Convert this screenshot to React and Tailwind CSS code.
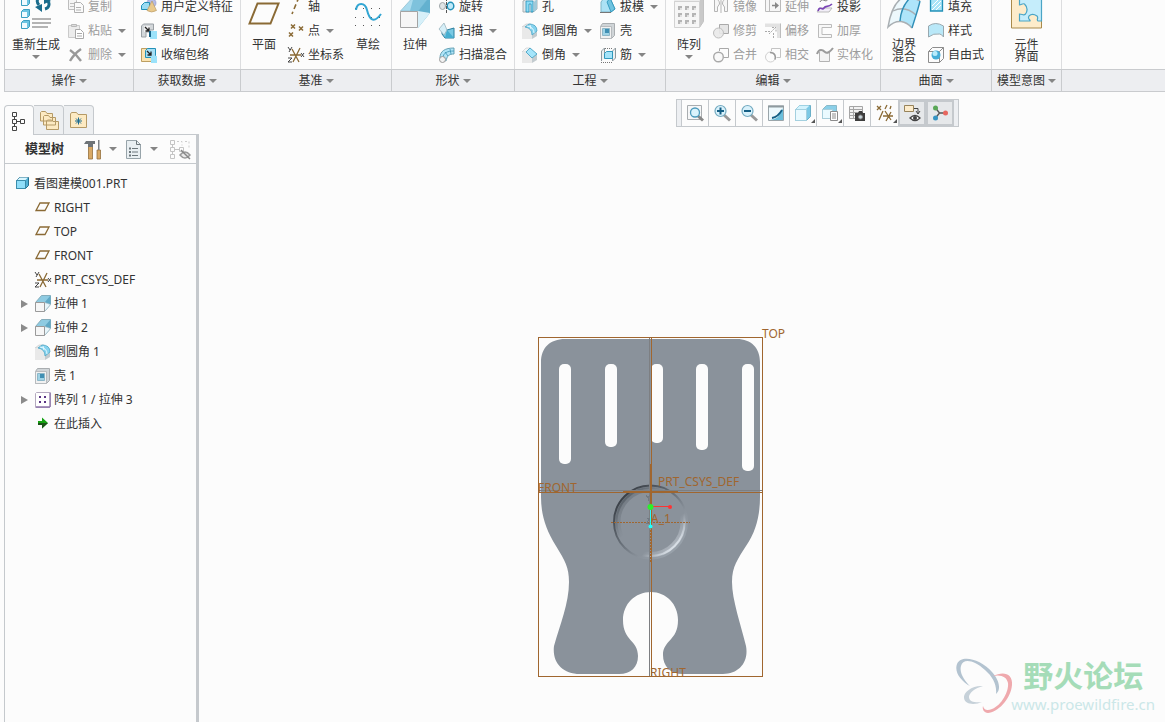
const cyan = '#2391b8';
const brown = '#8a6a35';
const gray = '#a9a9a9';

const icons = {
    // 操作
    regenerate: (
        <>
            <path d="M1.500 2.500l2-2h6v6l-2 2h-6zM1.500 14.500l2-2h6v6l-2 2h-6zM1.500 25.500l2-2h6v6l-2 2h-6z" fill="#6cc4e2" stroke="#3b9fc2" />
            <path d="M2 3h5v5H2zM2 15h5v5H2zM2 26h5v5H2z" fill="#effaff" />
            <path d="M21 0c-4 1-5 5-2 8M25 12c4-1 5-5 3-8" fill="none" stroke="#1b6c8c" strokeWidth="3" />
            <path d="M15 9l7-3v8zM31 3l-7 3V-2z" fill="#1b6c8c" transform="translate(0 1)" />
            <path d="M12 22h19M12 26h19M12 30h16" stroke="#9b9b9b" strokeWidth="1.600" />
        </>
    ),
    copy: (
        <>
            <path d="M.5-.5h6l2 2v9h-8zM2 4.500h4M2 7.500h4" fill="#f4f4f4" stroke="#bdbdbd" />
            <path d="M6.500 3.500h6l3 3v7h-9zM8 8.500h5M8 11h5" fill="#fafafa" stroke="#b0b0b0" />
        </>
    ),
    paste: (
        <>
            <path d="M.5 2.500h11v12H.5z" fill="#ececec" stroke="#cacaca" />
            <path d="M3.500 3.500v-2h5v2z" fill="#ddd" stroke="#b9b9b9" />
            <path d="M7.500 6.500h5l3 3v6h-8zM9 10.500h5M9 13h5" fill="#fff" stroke="#a9a9a9" />
        </>
    ),
    remove: <path d="M2 3q6 4 11 11M13 2Q6 7 2 14" fill="none" stroke="#999" strokeWidth="2.400" />,
    // 获取数据
    udf: (
        <>
            <circle cx="10.500" cy="4" r="4.500" fill="#b6bde6" stroke="#8f97cb" strokeWidth=".7" />
            <path d="M.5 6.500l3-3h5v5l-2 2h-6z" fill="#9bdcf3" stroke={cyan} />
            <path d="M11 2l4.500 9.500q-5 3-9.500 0z" fill="#e9c98c" stroke="#b09260" strokeWidth=".6" />
        </>
    ),
    copyGeom: (
        <>
            <path d="M.5 3l2-2h10v6H9v2H5v5H.5z" fill="#d3d7da" stroke="#9aa0a5" />
            <path d="M3 3h6v6H3z" fill="#f0f1f2" />
            <path d="M4 4l4 4M8 4.500V8H4.500" stroke="#222" fill="none" strokeWidth="1.300" />
            <path d="M9 8h7v8H9z" fill="#9be2fa" />
            <path d="M8 8h2v6H8z" fill="#17658a" />
        </>
    ),
    shrink: (
        <>
            <path d="M.5 1.500h12v13H.5z" fill="#fbe3b1" stroke="#bd9f62" />
            <path d="M4.500 3.500l2-2h8v7l-2 2h-8z" fill="#a5dff5" stroke={cyan} />
            <path d="M6 4l4 4M10 4.500V8H6.500" stroke="#222" fill="none" strokeWidth="1.300" />
            <path d="M10 9h6v7h-6z" fill="#9be2fa" />
        </>
    ),
    // 基准
    plane: <path d="M1.500 26.500L9.500 6.500h21l-8 20z" fill="none" stroke={brown} strokeWidth="2" />,
    axis: <path d="M11 -2L4 15" stroke={brown} strokeWidth="1.600" strokeDasharray="5 3" />,
    point: <path d="M3 1.500l4 4M7 1.500l-4 4M11 3.500l4 4M15 3.500l-4 4M1 9.500l4 4M5 9.500l-4 4" stroke={brown} strokeWidth="1.500" />,
    csys: (
        <>
            <path d="M2 8h11M4 2l7 13M12 1L5 15" stroke={brown} strokeWidth="1.300" />
            <path d="M0 0l2 3M4 0L1 5M0 11h4l-4 4h4M13 6l3 4M16 6l-3 4" stroke="#444" fill="none" />
        </>
    ),
    sketch: (
        <>
            <path d="M3 2.500h26M3 11.500h26M3 20.500h26M3 28.500h26" stroke="#555" strokeDasharray="1 7" />
            <path d="M4 13c1-8 9-8 11 0s6 15 14 4" fill="none" stroke="#32a6d3" strokeWidth="2" />
        </>
    ),
    // 形状
    extrudeBig: (
        <>
            <path d="M1.500 14L15 -1h16L19 14z" fill="#a9dbee" stroke="#8dbccd" strokeWidth=".7" />
            <path d="M15 -1L11 14h8L31 0z" fill="#7ec2dc" />
            <path d="M19 14L31 -1v17L19 31z" fill="#63b1cf" />
            <path d="M19 31V14l12 2z" fill="#d7f0f9" />
            <path d="M1.500 14.500h17v16h-17z" fill="#f6f6f6" stroke="#a4a4a4" />
        </>
    ),
    revolve: (
        <>
            <ellipse cx="3.500" cy="7" rx="3" ry="3.500" fill="#dfe4e6" stroke="#9fa6a9" />
            <ellipse cx="11.500" cy="7" rx="3.300" ry="3.700" fill="#bfeafa" stroke={cyan} strokeWidth="1.500" />
            <path d="M7.500-1v15" stroke="#555" strokeDasharray="3 1" />
        </>
    ),
    sweep: (
        <>
            <path d="M3 5l5 2 7-2v10H6L3 11z" fill="#7ac9e3" stroke="#2a7f9f" />
            <path d="M8 7l7 8H6z" fill="#46aed0" />
            <path d="M5 0l3 7-3 5-5-6z" fill="#d6eff8" stroke="#9ab4be" strokeWidth=".8" />
        </>
    ),
    blend: (
        <>
            <path d="M1 11C1 4 6 1 15 1v6c-5 0-7 2-8 7z" fill="#b0e4f7" stroke="#5a98ad" strokeWidth=".9" />
            <path d="M4 11c0-5 4-7 11-7M6 5l3 4M11 2l1 5" fill="none" stroke="#3b93b3" strokeWidth=".8" />
            <circle cx="3.500" cy="12.500" r="3" fill="#f2f2f2" stroke="#999" />
        </>
    ),
    // 工程
    hole: (
        <>
            <path d="M1 2l4-2h10v10l-4 3H1z" fill="#e3e7e9" stroke="#aab0b3" />
            <path d="M4 2h7v11H9V5H7v8H4z" fill="#8cdcf6" stroke={cyan} strokeWidth=".8" />
            <path d="M12 3l3-3v10l-3 3z" fill="#9fc9d8" />
        </>
    ),
    round: (
        <>
            <path d="M0 4l4-3h5L4 4z" fill="#e6e9ea" stroke="#c4c8ca" strokeWidth=".6" />
            <path d="M0 4h3q7 1 7 8v4H0z" fill="#e9e9e9" />
            <path d="M10 12l5-4v5l-5 3z" fill="#c3cbcf" />
            <path d="M3 4l4-3q8 0 8 7l-5 4q0-7-7-8z" fill="#86d3ef" stroke="#4ba4c4" strokeWidth=".8" />
            <path d="M5 3q7 1 7 7M8 2l1 4" stroke="#e6f9ff" fill="none" />
        </>
    ),
    draft: (
        <>
            <path d="M1 3l3-4h6l5 11-4 3H1z" fill="#ade2f5" stroke="#7fb5c8" />
            <path d="M7 3l3-4 5 11-4 3z" fill="#6fc3e0" stroke={cyan} strokeWidth=".8" />
            <path d="M0 13.500h11" stroke="#777" />
        </>
    ),
    shell: (
        <>
            <path d="M.5 3.500l2-3h12v12l-3 3H.5z" fill="#d0d5d8" stroke="#a9adb0" />
            <path d="M.5 3.500h11v12H.5z" fill="#f1f1f1" stroke="#b7bbbe" />
            <path d="M2.500 5.500h7v7h-7z" fill="#9fd3e6" stroke="#8cb7c8" />
            <path d="M5 6h4v4H5z" fill="#3f8fb3" />
        </>
    ),
    chamfer: (
        <>
            <path d="M0 5l4-4h4L4 5z" fill="#f3f4f4" stroke="#c4c8ca" strokeWidth=".6" />
            <path d="M0 5h4l6 6v5H0z" fill="#e9e9e9" />
            <path d="M10 11l5-4v6l-5 3z" fill="#c3cbcf" />
            <path d="M4 5l4-4 7 6-5 4z" fill="#a5e5fb" stroke="#4ba4c4" strokeWidth=".9" />
        </>
    ),
    rib: (
        <>
            <path d="M1.500 14V4l3-3v10M12.500 14V4l3-3v10l-3 3" fill="#edf1f2" stroke="#8f999e" />
            <path d="M4.500 6.500l2-2h6v7h-8z" fill="#a4e3f9" stroke={cyan} strokeWidth=".9" />
            <path d="M1 15.500h12M5 1.500h8" stroke="#777" strokeDasharray="1 1" />
        </>
    ),
    // 编辑
    patternBig: (
        <>
            <path d="M1.500 4.500l4-5h25v25l-4 6z" fill="#c9c9c9" stroke="#c2c2c2" />
            <path d="M1.500 4l4-5h24l-3 5z" fill="#ededed" />
            <path d="M1.500 4.500h25v26h-25z" fill="#f6f6f6" stroke="#d2d2d2" />
            <path d="M5 9h4v4H5zM12 9h4v4h-4zM19 9h4v4h-4zM5 16h4v4H5zM12 16h4v4h-4zM19 16h4v4h-4zM5 23h4v4H5zM12 23h4v4h-4zM19 23h4v4h-4z" fill="#b5b5b5" />
            <path d="M7 11h2v2H7zM14 11h2v2h-2zM21 11h2v2h-2zM7 18h2v2H7zM14 18h2v2h-2zM21 18h2v2h-2zM7 25h2v2H7zM14 25h2v2h-2zM21 25h2v2h-2z" fill="#e2e2e2" />
        </>
    ),
    mirror: (
        <path d="M1.500 12.500V0c4 0 5 2 5 5l-2 3v4.500zM14.500 12.500V0c-4 0-5 2-5 5l2 3v4.500zM8 -1v15" fill="#f6f6f6" stroke="#b5b5b5" />
    ),
    trim: (
        <>
            <path d="M6.500 1.500h9v9h-9z" fill="#e5e5e5" stroke={gray} />
            <circle cx="5.500" cy="10" r="5" fill="#e9e9e9" fillOpacity=".9" stroke="#bdbdbd" />
        </>
    ),
    merge: (
        <>
            <path d="M6.500 4V1.500h9v9h-5" fill="none" stroke={gray} />
            <circle cx="5.500" cy="10" r="4.800" fill="#f9f9f9" stroke={gray} strokeWidth="1.400" />
        </>
    ),
    extend: (
        <>
            <path d="M.5-.5h15v13H.5zM4.500-.5v13" fill="#f6f6f6" stroke="#bbb" />
            <path d="M7 6.500h4" stroke="#888" strokeWidth="1.500" />
            <path d="M10 3l4 3.500-4 3.500z" fill="#888" />
        </>
    ),
    offset: (
        <>
            <path d="M0 .5h15.500V15H12V4H0z" fill="#e2e2e2" />
            <path d="M15.500.5V15" stroke="#bdbdbd" />
            <path d="M4 11l6-6M7 4.500h4v4M0 8.500h6M8.500 10v6" fill="none" stroke={gray} strokeDasharray="2 1" />
        </>
    ),
    intersect: (
        <>
            <path d="M6.500 4V1.500h9v9h-4" fill="none" stroke="#c4c4c4" />
            <circle cx="5.500" cy="10" r="5" fill="none" stroke="#d0d0d0" />
            <path d="M5 5.500c5 0 6 4 5 7" fill="none" stroke="#999" strokeWidth="1.500" />
        </>
    ),
    project: (
        <>
            <path d="M3 3c3-6 5 3 9-4" fill="none" stroke="#777" />
            <path d="M0 13l3-4h12l-3 4z" fill="#f2eef8" stroke="#bbb" />
            <path d="M1 12c2-6 4 0 6-3s4 0 8-4" fill="none" stroke="#7b45b5" strokeWidth="1.700" />
        </>
    ),
    thicken: <path d="M14.500 1.500H1.500v13h13v-3H5v-7h9.500z" fill="#f8f8f8" stroke="#bbb" />,
    solidify: (
        <>
            <path d="M2.500 5v9.500h10V5" fill="#f3f3f3" stroke="#b3b3b3" />
            <path d="M0 7c2-6 6-4 8-2s5 0 8-4" fill="none" stroke="#9b9b9b" strokeWidth="2" />
        </>
    ),
    // 曲面
    boundary: (
        <>
            <path d="M0 30C2 18 6 6 14 1q9-2 18 3c-2 9-5 17-8 27-6-7-15-10-24-1z" fill="#edf8fc" />
            <path d="M22 1q6 1 10 3c-2 9-5 17-8 27-4-4-7-6-12-7q1-14 10-23z" fill="#aee5fa" />
            <path d="M24 31c-6-7-15-10-24-1C2 18 6 6 14 1q9-2 18 3" fill="none" stroke="#a9afb3" strokeWidth="1.500" />
            <path d="M5 14q12-6 23 4" fill="none" stroke="#a9afb3" strokeWidth="1.300" />
            <path d="M22 1q-9 9-10 23M32 4c-2 9-5 17-8 27" fill="none" stroke="#2f8fb7" strokeWidth="1.400" />
        </>
    ),
    fill: (
        <>
            <path d="M2.500 0h12v12h-12z" fill="#a9e4f8" stroke={cyan} strokeWidth="1.300" />
            <path d="M4 7l6-6M4 11l9-9M8 11l5-5" stroke="#fff" />
        </>
    ),
    style: <path d="M.5 14V3q7-5 15 0v11q-2-3-4-3-6-1-11 3z" fill="#b9e8f8" stroke="#98a8af" />,
    freestyle: (
        <>
            <path d="M.5 4.500h11v11H.5zM.5 4.500l4-4h11v11l-4 4M11.500 4.500l4-4" fill="none" stroke="#8d8d8d" />
            <circle cx="8" cy="8" r="4.500" fill="#45aed8" />
            <circle cx="7" cy="6.500" r="2.500" fill="#b8ebfb" />
        </>
    ),
    component: (
        <>
            <path d="M.5-1h30v32H.5z" fill="#fdeccb" stroke="#a98a4b" />
            <path d="M8.500-1h22v25H27c-2-1 1-3-1-5-3-2-6-2-8 0-2 3 2 4 1 5H8.500v-7c3 0 4 2 6 0 2-3 2-7-1-10-2-1-3 1-5 1z" fill="#c5edfb" stroke="#4aa5c6" strokeWidth="1.200" />
        </>
    ),
    // 视图工具栏
    zoomFit: (
        <>
            <path d="M.5.5h14v14H.5z" fill="#f6f7f8" stroke="#a9adb0" />
            <path d="M11 11l5 4.500" stroke="#888" strokeWidth="3" />
            <circle cx="8" cy="7.500" r="4.500" fill="#daf3fc" stroke="#4b9abc" strokeWidth="1.300" />
        </>
    ),
    zoomIn: (
        <>
            <path d="M10 10l6 5.500" stroke="#999" strokeWidth="3" />
            <circle cx="6.500" cy="6" r="5.500" fill="#d8f1fb" stroke="#73aac0" strokeWidth="1.200" />
            <path d="M3 6h7M6.500 2.500v7" stroke="#155f85" strokeWidth="2" />
        </>
    ),
    zoomOut: (
        <>
            <path d="M10 10l6 5.500" stroke="#999" strokeWidth="3" />
            <circle cx="6.500" cy="6" r="5.500" fill="#d8f1fb" stroke="#73aac0" strokeWidth="1.200" />
            <path d="M3 6h7" stroke="#155f85" strokeWidth="2" />
        </>
    ),
    repaint: (
        <>
            <path d="M.5 1h15v14.500H.5z" fill="#eef9fd" stroke="#9aa5aa" />
            <path d="M15 3v12H2q9 0 13-12z" fill="#6cbfdc" />
            <path d="M4 13q6-1 10-8" stroke="#155f85" strokeWidth="1.800" fill="none" />
            <path d="M0 1.500h16" stroke="#8f9a9f" strokeWidth="2" />
        </>
    ),
    display: (
        <>
            <path d="M.5 4.500l4-4h11v11l-4 4H.5z" fill="#7cc9e5" stroke="#6bb0c8" />
            <path d="M1 4l3.500-3.500h10L11 4z" fill="#d3f3fd" />
            <path d="M.5 4.500h11v11H.5z" fill="#eafaff" stroke="#a4d0df" />
        </>
    ),
    saved: (
        <>
            <path d="M.5 4.500l4-4h10v9l-4 4H.5z" fill="#8acfe8" stroke="#89b9c9" />
            <path d="M.5 4.500h10v9H.5z" fill="#eafaff" stroke="#a8cedb" />
            <path d="M8.500 6.500h7v9h-7zM10 9h4M10 11h4M10 13h4" fill="#fff" stroke="#8c8c8c" />
        </>
    ),
    camera: (
        <>
            <path d="M.5 1.500h13v12H.5zM.5 4.500h13M.5 7.500h13M.5 10.500h13M4.500 1v12" fill="#f2f2f2" stroke="#a5a5a5" />
            <path d="M6 8h3l1-2h3l1 2h2v8H6z" fill="#3d3d3d" />
            <circle cx="11.500" cy="12" r="2" fill="#c7d5dc" stroke="#888" />
        </>
    ),
    datum: <path d="M0 1l4 4M4 1L0 5M10 0L8 4M6 6l-4 9M14 1l-1 3M6 11h10M8 6l6 9M14 7l-5 9" stroke={brown} strokeWidth="1.300" />,
    annotation: (
        <>
            <path d="M.5.5h9v6h-9z" fill="#fdeccb" stroke="#97835a" />
            <path d="M10 3.500h4v5M12 6l2 3 2-3" fill="none" stroke="#444" />
            <path d="M6 13q5-5 10 0-5 5-10 0z" fill="#fff" stroke="#444" strokeWidth="1.300" />
            <circle cx="11" cy="13" r="2" fill="#444" />
        </>
    ),
    spin: (
        <>
            <path d="M3.500 3l4 5h6M7.500 8l-4 5" fill="none" stroke="#555" strokeWidth="1.300" />
            <circle cx="3.500" cy="3" r="2.500" fill="#59a756" />
            <circle cx="13.500" cy="8" r="2.500" fill="#e7675f" />
            <circle cx="3.500" cy="13" r="2.500" fill="#3694c3" />
        </>
    ),
    // 模型树
    tree: <path d="M2.500.5h4v4h-4zM2.500 7.500h4v4h-4zM2.500 14.500h4v4h-4zM10.500 7.500h4v4h-4zM4.500 4.500v3M4.500 11.500v3M6.500 9.500h4" fill="none" stroke="#444" />,
    folders: <path d="M.5 10V1.500l1-1h4L7 2.500h5.500V10zM3.500 14V5.500l1-1h4L10 6.500h5.500V14zM6.500 18.500V10l1-1h4L13 10.500h5.500v8z" fill="#fdeac2" stroke="#b59a66" />,
    favorites: (
        <>
            <path d="M.5 16.500V3l1-1.500h5L8 3.500h8.500v13z" fill="#fdeac2" stroke="#b59a66" />
            <path d="M8.500 6.500v7M5 10h7M6 7.500l5 5M11 7.500l-5 5" stroke="#1d6c90" />
        </>
    ),
    tools: (
        <>
            <path d="M4.500 5h4v14h-4zM13 10h3.500v9H13z" fill="#d9a965" stroke="#94703c" strokeWidth=".8" />
            <path d="M0 4l2-3h9v3H9v3H4V4z" fill="#6e7478" />
            <path d="M14 0h1.500v10H14z" fill="#7d8286" />
        </>
    ),
    list: (
        <>
            <path d="M1.500.5h10l4 4v14h-14z" fill="#e9eff2" stroke="#98a4aa" />
            <path d="M11.500.5v4h4M7 8.500h6M7 12h6M7 15.500h6" fill="none" stroke="#6d777c" />
            <path d="M4 7.500h2v2H4zM4 11h2v2H4zM4 14.500h2v2H4z" fill="#6d777c" />
        </>
    ),
    hideTree: (
        <>
            <path d="M.5.5h4v4h-4zM.5 7.500h4v4h-4zM.5 14.500h4v4h-4zM2.500 5v2M2.500 12v2M5 9.500h4M9.500 7.500h4v4h-4z" fill="none" stroke="#c4c4c4" />
            <path d="M7 1.500h5v4M15 1.500h4v8" fill="none" stroke="#ccc" strokeDasharray="2 2" />
            <path d="M10 15q5-6 10 0-5 6-10 0z" fill="#e9e9e9" stroke="#999" strokeWidth="1.500" />
            <path d="M11 10l9 9" stroke="#888" strokeWidth="1.500" />
        </>
    ),
    part: (
        <>
            <path d="M1.500 4.500l3-3h9v8l-3 3h-9z" fill="#4fb0d6" stroke="#26708f" />
            <path d="M2 4l3-2.500h8L10.500 4z" fill="#d9f6ff" />
            <path d="M1.500 4.500h9v8h-9z" fill="#8fdefa" stroke="#3b8dac" />
        </>
    ),
    datumPlane: <path d="M1 10.500l4-7.500h9l-4 7.500z" fill="none" stroke={brown} strokeWidth="1.300" />,
    extrude: (
        <>
            <path d="M.5 6.500l6-7h9v9l-6 7z" fill="#8ecbe2" stroke="#86adbb" />
            <path d="M9.500 6.500l6-7v9z" fill="#5fa9c6" />
            <path d="M9.500 15.500v-9l6 2z" fill="#e8f6fb" stroke="#a8bcc4" strokeWidth=".6" />
            <path d="M.5 6.500h9v9h-9z" fill="#f6f6f6" stroke="#9a9a9a" />
        </>
    ),
    pattern: (
        <>
            <path d="M.5 1.500l1-1h14v14l-1 1H.5z" fill="#fff" stroke="#b5aac0" />
            <path d="M4 4h2v2H4zM9 4h2v2H9zM4 9h2v2H4zM9 9h2v2H9z" fill="#5a3585" />
            <path d="M15 1v14M1 15h14" stroke="#8d74aa" strokeWidth="1.300" />
        </>
    ),
    insert: (
        <>
            <path d="M3 5h4V1.500L13 7l-6 5.500V9H3z" fill="#15a312" />
            <path d="M3 7h10l-6 5.500V9H3z" fill="#1b5317" />
        </>
    ),
};

function Icon({ name, size = 16 }) {
    return (
        <svg width={size} height={size} viewBox={`0 0 ${size} ${size}`} className="shrink-0 overflow-visible" aria-hidden="true">
            {icons[name]}
        </svg>
    );
}

function Caret() {
    return (
        <svg width="8" height="4" viewBox="0 0 8 4" className="shrink-0" aria-hidden="true">
            <path d="M0 0h8L4 4z" fill="#858585" />
        </svg>
    );
}

const ribbon = [
    {
        title: '操作', width: 'w-[129px]',
        items: [
            { big: true, icon: 'regenerate', lines: ['重新生成'], menu: true, width: 'w-12' },
            { rows: [['copy', '复制', false, true], ['paste', '粘贴', true, true], ['remove', '删除', true, true]] },
        ],
    },
    {
        title: '获取数据', width: 'w-[107px]',
        items: [{ rows: [['udf', '用户定义特征'], ['copyGeom', '复制几何'], ['shrink', '收缩包络']] }],
    },
    {
        title: '基准', width: 'w-[151px]',
        items: [
            { big: true, icon: 'plane', lines: ['平面'] },
            { rows: [['axis', '轴'], ['point', '点', true], ['csys', '坐标系']] },
            { big: true, icon: 'sketch', lines: ['草绘'] },
        ],
    },
    {
        title: '形状', width: 'w-[123px]',
        items: [
            { big: true, icon: 'extrudeBig', lines: ['拉伸'] },
            { rows: [['revolve', '旋转'], ['sweep', '扫描', true], ['blend', '扫描混合']] },
        ],
    },
    {
        title: '工程', width: 'w-[151px]',
        items: [
            { rows: [['hole', '孔'], ['round', '倒圆角', true], ['chamfer', '倒角', true]] },
            { rows: [['draft', '拔模', true], ['shell', '壳'], ['rib', '筋', true]] },
        ],
    },
    {
        title: '编辑', width: 'w-[215px]',
        items: [
            { big: true, icon: 'patternBig', lines: ['阵列'], menu: true },
            { rows: [['mirror', '镜像', false, true], ['trim', '修剪', false, true], ['merge', '合并', false, true]] },
            { rows: [['extend', '延伸', false, true], ['offset', '偏移', false, true], ['intersect', '相交', false, true]] },
            { rows: [['project', '投影'], ['thicken', '加厚', false, true], ['solidify', '实体化', false, true]] },
        ],
    },
    {
        title: '曲面', width: 'w-[111px]',
        items: [
            { big: true, icon: 'boundary', lines: ['边界', '混合'] },
            { rows: [['fill', '填充'], ['style', '样式'], ['freestyle', '自由式']] },
        ],
    },
    {
        title: '模型意图', width: 'w-[70px]', center: true,
        items: [{ big: true, icon: 'component', lines: ['元件', '界面'] }],
    },
];

function BigButton({ item }) {
    return (
        <button className={`${item.width || 'w-8'} h-[72px] pt-[2px] shrink-0 flex flex-col items-center`}>
            <Icon name={item.icon} size={32} />
            <span className="mt-[10px] leading-3 whitespace-nowrap">
                {item.lines.map(line => <span key={line} className="block">{line}</span>)}
            </span>
            {item.menu && <span className="mt-1"><Caret /></span>}
        </button>
    );
}

function SmallButton({ row }) {
    const [icon, label, menu, disabled] = row;
    return (
        <button
            disabled={disabled}
            className={`h-6 flex items-center gap-1 whitespace-nowrap ${disabled ? 'text-[#9c9c9c]' : 'text-[#333333]'}`}
        >
            <Icon name={icon} />
            <span>{label}</span>
            {menu && <span className="pl-[2px]"><Caret /></span>}
        </button>
    );
}

function Ribbon() {
    return (
        <header className="ml-1 flex border-l border-[#c9cbce]">
            {ribbon.map(group => (
                <section key={group.title} className={`${group.width} shrink-0`}>
                    <div className={`h-[69px] pb-[2px] px-[7px] flex items-end gap-2 overflow-hidden border-r border-[#dcdddf] ${group.center ? 'justify-center' : ''}`}>
                        {group.items.map((item, i) => item.big ? (
                            <BigButton key={i} item={item} />
                        ) : (
                            <div key={i} className="shrink-0 flex flex-col">
                                {item.rows.map(row => <SmallButton key={row[1]} row={row} />)}
                            </div>
                        ))}
                    </div>
                    <button className="w-full h-[23px] flex items-center justify-center gap-[3px] bg-[#edeef1] border-y border-r border-[#c9cbce]">
                        {group.title}
                        <Caret />
                    </button>
                </section>
            ))}
            <div className="flex-1 flex flex-col justify-end">
                <div className="h-[23px] bg-[#edeef1] border-y border-[#c9cbce]" />
            </div>
        </header>
    );
}

const treeItems = [
    { icon: 'datumPlane', label: 'RIGHT' },
    { icon: 'datumPlane', label: 'TOP' },
    { icon: 'datumPlane', label: 'FRONT' },
    { icon: 'csys', label: 'PRT_CSYS_DEF' },
    { icon: 'extrude', label: '拉伸 1', expandable: true },
    { icon: 'extrude', label: '拉伸 2', expandable: true },
    { icon: 'round', label: '倒圆角 1' },
    { icon: 'shell', label: '壳 1' },
    { icon: 'pattern', label: '阵列 1 / 拉伸 3', expandable: true },
    { icon: 'insert', label: '在此插入' },
];

function ModelTree() {
    return (
        <aside className="ml-1 mt-[13px] w-[195px] shrink-0 flex flex-col">
            <div role="tablist" className="flex h-[30px]">
                <button role="tab" aria-selected="true" aria-label="模型树" className="w-[30px] flex items-center justify-center border-t border-x border-[#c5c9cd] rounded-t-sm">
                    <Icon name="tree" size={18} />
                </button>
                <button role="tab" aria-selected="false" aria-label="文件夹浏览器" className="w-[30px] flex items-center justify-center bg-[#edeff1] border-t border-r border-b border-[#c5c9cd] rounded-tr-sm">
                    <Icon name="folders" size={18} />
                </button>
                <button role="tab" aria-selected="false" aria-label="收藏夹" className="w-[30px] flex items-center justify-center bg-[#edeff1] border-t border-r border-b border-[#c5c9cd] rounded-tr-sm">
                    <Icon name="favorites" size={18} />
                </button>
                <div className="flex-1 border-b border-[#c5c9cd]" />
            </div>
            <div className="flex-1 border-l border-l-[#c5c9cd] border-r-3 border-r-[#c5c9cd]">
                <div className="h-[29px] pl-5 pr-1 flex items-center border-b border-[#c5c9cd]">
                    <h2 className="text-[13px] font-bold whitespace-nowrap">模型树</h2>
                    <button aria-label="设置" className="ml-5 flex items-center gap-[6px]">
                        <Icon name="tools" size={19} />
                        <Caret />
                    </button>
                    <button aria-label="显示" className="ml-2 flex items-center gap-[6px]">
                        <Icon name="list" size={19} />
                        <Caret />
                    </button>
                    <button aria-label="隐藏树" disabled className="ml-3">
                        <Icon name="hideTree" size={19} />
                    </button>
                </div>
                <ul className="pt-2">
                    <li className="h-6 pl-[10px] flex items-center gap-[3px]">
                        <Icon name="part" />
                        <span>看图建模001.PRT</span>
                    </li>
                    {treeItems.map(item => (
                        <li key={item.label} className="h-6 pl-[14px] flex items-center">
                            <span className="w-4">
                                {item.expandable && (
                                    <button aria-label={`展开 ${item.label}`} className="block">
                                        <svg width="10" height="8" viewBox="0 0 10 8" aria-hidden="true">
                                            <path d="M2 0l7 4-7 4z" fill="#8b8b8b" />
                                        </svg>
                                    </button>
                                )}
                            </span>
                            <Icon name={item.icon} />
                            <span className="pl-[3px]">{item.label}</span>
                        </li>
                    ))}
                </ul>
            </div>
        </aside>
    );
}

const viewTools = [
    { icon: 'zoomFit', label: '重新调整' },
    { icon: 'zoomIn', label: '放大' },
    { icon: 'zoomOut', label: '缩小' },
    { icon: 'repaint', label: '重画' },
    { icon: 'display', label: '显示样式', menu: true },
    { icon: 'saved', label: '已保存方向', menu: true },
    { icon: 'camera', label: '视图管理器' },
    { icon: 'datum', label: '基准显示过滤器', menu: true, wide: true },
    { icon: 'annotation', label: '注释显示', pressed: true, wide: true },
    { icon: 'spin', label: '旋转中心', pressed: true, wide: true },
];

function ViewToolbar() {
    return (
        <div role="toolbar" className="ml-[477px] mt-[7px] w-max h-7 flex bg-[#edeff2] border border-[#c5c9cd] px-1">
            {viewTools.map(tool => (
                <button
                    key={tool.icon}
                    aria-label={tool.label}
                    aria-pressed={tool.pressed}
                    className={`relative flex items-center justify-center border-[#c5c9cd] ${tool.wide ? 'w-7' : 'w-[27px]'} ${tool.pressed ? 'bg-[#e6e8ea] border-2' : 'bg-[#fcfcfc] border-l'}`}
                >
                    <Icon name={tool.icon} />
                    {tool.menu && (
                        <svg width="4" height="4" viewBox="0 0 4 4" className="absolute right-px bottom-[3px]" aria-hidden="true">
                            <path d="M4 0v4H0z" fill="#555" />
                        </svg>
                    )}
                </button>
            ))}
        </div>
    );
}

function PartView() {
    return (
        <svg width="265" height="360" viewBox="530 325 265 360" className="absolute left-[331px] top-[233px]" role="img" aria-label="零件">
            <defs>
                <linearGradient id="rim" x1="0" y1="0" x2="1" y2="1">
                    <stop offset="0.1" stopColor="#343a41" />
                    <stop offset="0.5" stopColor="#6f7780" />
                    <stop offset="0.65" stopColor="#8a929b" />
                    <stop offset="0.88" stopColor="#9aa3ac" />
                </linearGradient>
                <linearGradient id="glow" x1="0" y1="0" x2="1" y2="1">
                    <stop offset="0.1" stopColor="#545c64" />
                    <stop offset="0.4" stopColor="#8a929b" />
                    <stop offset="0.68" stopColor="#8a929b" />
                    <stop offset="0.86" stopColor="#dbe2e9" />
                </linearGradient>
            </defs>
            <path
                d="M541 362C541 348 550 339 565 339H737C751 339 760 348 760 362V497C760 515 756 532 746 546C738 559 732 566 732 582C732 600 741 625 746 646C749 662 739 674 723 674H683C670 674 663 666 663 655C663 640 678 641 678 620C678 604 666 592 651 592C635 592 623 604 623 620C623 641 638 640 638 656C638 667 631 674 619 674H580C562 674 552 662 554 646C560 625 569 603 569 582C569 567 565 561 556 546C546 530 541 515 541 497Z"
                fill="#8a929b"
            />
            <g fill="#fcfcfc">
                <rect x="559" y="364" width="12" height="100" rx="5" />
                <rect x="605" y="364" width="12" height="83" rx="5" />
                <rect x="651" y="364" width="12" height="79" rx="5" />
                <rect x="696" y="364" width="12" height="86" rx="5" />
                <rect x="742" y="364" width="12" height="107" rx="5" />
            </g>
            <g fill="none">
                <circle cx="650.500" cy="522" r="33" stroke="url(#glow)" strokeOpacity=".45" strokeWidth="6" />
                <circle cx="650.500" cy="522" r="34" stroke="url(#glow)" strokeWidth="2" />
                <circle cx="650.500" cy="522" r="36.500" stroke="url(#rim)" strokeWidth="2" />
            </g>
            <g fill="none" shapeRendering="crispEdges">
                <path d="M649.500 337V677M538 490.500H763" stroke="#7d7f82" />
                <path d="M538.500 337.500H762.500V676.500H538.500ZM651.500 337V677M538 492.500H763" stroke="#a0662f" />
                <path d="M651 464V506M623 492H678" stroke="#a0662f" strokeWidth="2" />
                <path d="M611 522.500H690M650.500 527V562" stroke="#a0662f" strokeDasharray="2 1" />
                <path d="M646 495l2 3M650 495l-2 3v3M647 518h3l-3 5h3" stroke="#737a82" />
                <path d="M650.500 507V526" stroke="#2ff" />
                <path d="M651 506.500H670" stroke="#f33" />
            </g>
            <circle cx="650.500" cy="507" r="3" fill="#2bf02b" />
            <circle cx="670" cy="507" r="2" fill="#f33" />
            <circle cx="650.500" cy="526.500" r="2" fill="#2ff" />
            <g fill="#a0662f" className="text-[12px]">
                <text x="762" y="338">TOP</text>
                <text x="658" y="486">PRT_CSYS_DEF</text>
                <text x="538" y="492">FRONT</text>
                <text x="651" y="523">A_1</text>
                <text x="650" y="677">RIGHT</text>
            </g>
        </svg>
    );
}

function Watermark() {
    return (
        <div className="absolute right-[10px] bottom-2 flex items-end">
            <svg width="60" height="58" viewBox="0 0 60 58" aria-hidden="true">
                <g fillRule="evenodd">
                    <path d="M2 8C6-2 26 3 37 16c8 9 9 18 4 22 1-9-3-17-11-24C19 4 8 2 6 10c-2 7 4 15 9 20C6 25-1 16 2 8z" fill="#b3c3d0" />
                    <path d="M38 20c10-5 20-3 19 9-1 14-15 28-24 28-4 0-6-4-5-7 1 4 4 5 9 3 10-4 17-18 16-26-1-6-7-9-15-7z" fill="#efa9ad" />
                    <path d="M28 30c-10-1-20 6-19 12 1 7 11 7 18 4-6 1-13 0-13-5 0-4 6-9 14-11z" fill="#c6d1d9" />
                </g>
            </svg>
            <div className="-ml-1">
                <p className="pl-3 text-[30px] leading-9 font-bold text-[#a5dcb8]">野火论坛</p>
                <a href="http://www.proewildfire.cn" className="block text-[15px] leading-5 text-[#cbe7e8]">www.proewildfire.cn</a>
            </div>
        </div>
    );
}

export default function App() {
    return (
        <div className="min-h-screen flex flex-col overflow-hidden bg-[#fcfcfc] text-[12px] text-[#333333] font-['Noto_Sans','Noto_Sans_CJK_SC',sans-serif]">
            <Ribbon />
            <div className="flex-1 flex">
                <ModelTree />
                <main className="relative flex-1">
                    <ViewToolbar />
                    <PartView />
                    <Watermark />
                </main>
            </div>
        </div>
    );
}
